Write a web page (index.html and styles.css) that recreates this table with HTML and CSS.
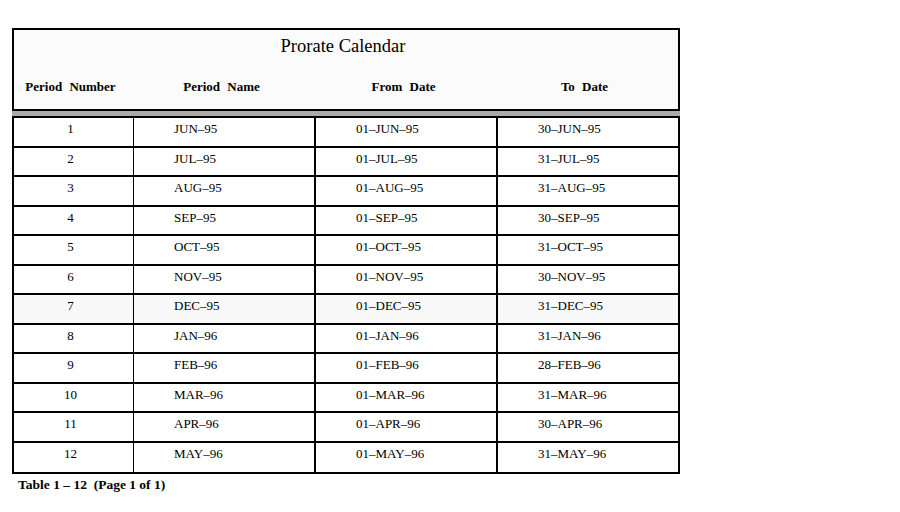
FILE: index.html
```html
<!DOCTYPE html>
<html>
<head>
<meta charset="utf-8">
<link rel="stylesheet" href="styles.css">
</head>
<body>
<div class="page">
  <div class="head">
    <div class="title">Prorate Calendar</div>
    <div class="labels">
      <div class="lab">Period Number</div>
      <div class="lab">Period Name</div>
      <div class="lab">From Date</div>
      <div class="lab">To Date</div>
    </div>
  </div>
  <div class="band"></div>
  <div class="body">
    <div class="row"><div class="c num">1</div><div class="c">JUN–95</div><div class="c">01–JUN–95</div><div class="c last">30–JUN–95</div></div>
    <div class="row"><div class="c num">2</div><div class="c">JUL–95</div><div class="c">01–JUL–95</div><div class="c last">31–JUL–95</div></div>
    <div class="row"><div class="c num">3</div><div class="c">AUG–95</div><div class="c">01–AUG–95</div><div class="c last">31–AUG–95</div></div>
    <div class="row"><div class="c num">4</div><div class="c">SEP–95</div><div class="c">01–SEP–95</div><div class="c last">30–SEP–95</div></div>
    <div class="row"><div class="c num">5</div><div class="c">OCT–95</div><div class="c">01–OCT–95</div><div class="c last">31–OCT–95</div></div>
    <div class="row"><div class="c num">6</div><div class="c">NOV–95</div><div class="c">01–NOV–95</div><div class="c last">30–NOV–95</div></div>
    <div class="row tint"><div class="c num">7</div><div class="c">DEC–95</div><div class="c">01–DEC–95</div><div class="c last">31–DEC–95</div></div>
    <div class="row"><div class="c num">8</div><div class="c">JAN–96</div><div class="c">01–JAN–96</div><div class="c last">31–JAN–96</div></div>
    <div class="row"><div class="c num">9</div><div class="c">FEB–96</div><div class="c">01–FEB–96</div><div class="c last">28–FEB–96</div></div>
    <div class="row"><div class="c num">10</div><div class="c">MAR–96</div><div class="c">01–MAR–96</div><div class="c last">31–MAR–96</div></div>
    <div class="row"><div class="c num">11</div><div class="c">APR–96</div><div class="c">01–APR–96</div><div class="c last">30–APR–96</div></div>
    <div class="row end"><div class="c num">12</div><div class="c">MAY–96</div><div class="c">01–MAY–96</div><div class="c last">31–MAY–96</div></div>
  </div>
  <div class="foot">Table 1 – 12&nbsp; (Page 1 of 1)</div>
</div>
</body>
</html>
```

FILE: styles.css
```css
html, body {
  margin: 0;
  padding: 0;
  background: #ffffff;
}
.page {
  padding: 28px 0 0 12px;
  width: 668px;
  font-family: "Liberation Serif", "Times New Roman", serif;
  color: #000;
}
.head {
  box-sizing: border-box;
  width: 668px;
  height: 83px;
  border: 2px solid #000;
  background: #fbfbfb;
  padding-top: 5px;
}
.title {
  text-align: center;
  font-size: 18.5px;
  line-height: 22px;
  padding-right: 6px;
}
.labels {
  margin-top: 22px;
  display: grid;
  grid-template-columns: 120px 182px 182px 180px;
}
.lab {
  text-align: center;
  font-weight: bold;
  font-size: 13px;
  line-height: 16px;
  word-spacing: 4px;
  padding-right: 7px;
}
.band {
  width: 668px;
  height: 5px;
  background: #aaaaaa;
}
.body {
  box-sizing: border-box;
  width: 668px;
  height: 358px;
  border: 2px solid #000;
  display: grid;
  grid-template-rows: repeat(12, 1fr);
}
.row {
  display: grid;
  grid-template-columns: 120px 182px 182px 180px;
  border-bottom: 2px solid #000;
}
.row.end {
  border-bottom: none;
}
.row.tint {
  background: #f9f9f9;
}
.c {
  font-size: 13px;
  line-height: 15px;
  padding: 3px 0 0 40px;
  border-right: 2px solid #000;
}
.c.num {
  padding: 3px 6px 0 0;
  text-align: center;
  border-right: 1px solid #000;
}
.c.last {
  border-right: none;
}
.foot {
  font-weight: bold;
  font-size: 13.5px;
  line-height: 16px;
  padding: 3px 0 0 6px;
}
```
